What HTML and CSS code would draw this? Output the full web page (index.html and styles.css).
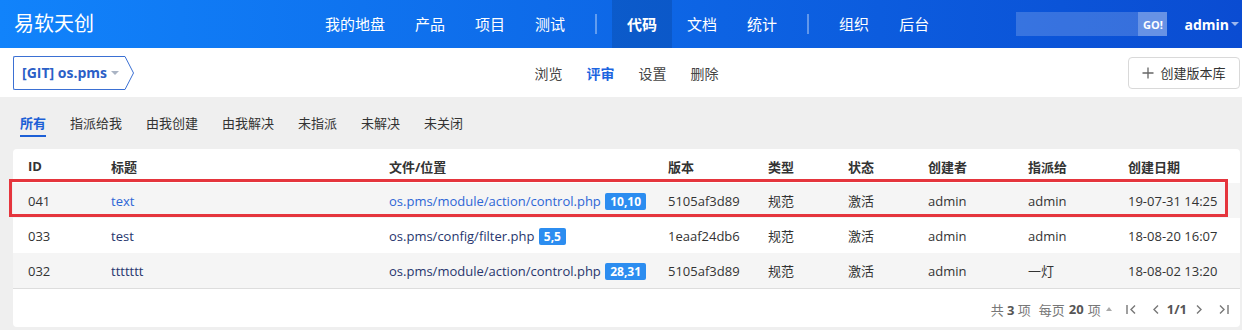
FILE: index.html
```html
<!DOCTYPE html>
<html lang="zh-CN">
<head>
    <meta charset="UTF-8">
    <title>代码评审 - 易软天创</title>
    <link rel="stylesheet" href="styles.css">
</head>
<body>

    <header class="topbar">
        <div class="logo">易软天创</div>
        <nav class="mainnav">
            <a href="#">我的地盘</a>
            <a href="#">产品</a>
            <a href="#">项目</a>
            <a href="#">测试</a>
            <span class="divider"></span>
            <a href="#" class="active">代码</a>
            <a href="#">文档</a>
            <a href="#">统计</a>
            <span class="divider"></span>
            <a href="#">组织</a>
            <a href="#">后台</a>
        </nav>
        <form class="search">
            <input type="text">
            <button type="button">GO!</button>
        </form>
        <div class="user">admin<span class="caret"></span></div>
    </header>

    <div class="subbar">
        <div class="repo">
            <span class="repo-name">[GIT] os.pms <span class="caret gray"></span></span>
            <svg class="repo-arrow" width="10" height="34" viewBox="0 0 10 34">
                <polyline points="0,0.5 8.5,17 0,33.5" fill="#fff" stroke="#3b70d3" stroke-width="1"/>
            </svg>
        </div>
        <nav class="submenu">
            <a href="#">浏览</a>
            <a href="#" class="active">评审</a>
            <a href="#">设置</a>
            <a href="#">删除</a>
        </nav>
        <div class="actions">
            <button class="btn-create">
                <svg width="12" height="12" viewBox="0 0 12 12"><path d="M6 0.5V11.5M0.5 6H11.5" stroke="#666" stroke-width="1.3"/></svg>
                创建版本库
            </button>
        </div>
    </div>

    <main class="content">
        <div class="filters">
            <a href="#" class="active">所有</a>
            <a href="#">指派给我</a>
            <a href="#">由我创建</a>
            <a href="#">由我解决</a>
            <a href="#">未指派</a>
            <a href="#">未解决</a>
            <a href="#">未关闭</a>
        </div>

        <div class="card">
            <table class="review-table">
                <colgroup>
                    <col style="width:83px"><col style="width:278px"><col style="width:279px">
                    <col style="width:100px"><col style="width:80px"><col style="width:80px">
                    <col style="width:100px"><col style="width:100px"><col>
                </colgroup>
                <thead>
                    <tr>
                        <th>ID</th><th>标题</th><th>文件/位置</th><th>版本</th><th>类型</th>
                        <th>状态</th><th>创建者</th><th>指派给</th><th>创建日期</th>
                    </tr>
                </thead>
                <tbody>
                    <tr class="odd current">
                        <td>041</td>
                        <td><a href="#">text</a></td>
                        <td><a href="#">os.pms/module/action/control.php</a> <span class="badge">10,10</span></td>
                        <td>5105af3d89</td><td>规范</td><td>激活</td><td>admin</td><td>admin</td><td>19-07-31 14:25</td>
                    </tr>
                    <tr>
                        <td>033</td>
                        <td><a href="#">test</a></td>
                        <td><a href="#">os.pms/config/filter.php</a> <span class="badge">5,5</span></td>
                        <td>1eaaf24db6</td><td>规范</td><td>激活</td><td>admin</td><td>admin</td><td>18-08-20 16:07</td>
                    </tr>
                    <tr class="odd">
                        <td>032</td>
                        <td><a href="#">ttttttt</a></td>
                        <td><a href="#">os.pms/module/action/control.php</a> <span class="badge">28,31</span></td>
                        <td>5105af3d89</td><td>规范</td><td>激活</td><td>admin</td><td>一灯</td><td>18-08-02 13:20</td>
                    </tr>
                </tbody>
            </table>

            <div class="pager">
                <span>共 <strong>3</strong> 项</span>
                <span class="per-page">每页 <strong>20</strong> 项 <span class="caret-up"></span></span>
                <svg class="pg-icon pg-first" width="10" height="11" viewBox="0 0 10 11"><path d="M1 1V10M9 1.5L5 5.5L9 9.5" /></svg>
                <svg class="pg-icon pg-prev" width="7" height="11" viewBox="0 0 7 11"><path d="M6 1.5L2 5.5L6 9.5" /></svg>
                <strong class="pg-num">1/1</strong>
                <svg class="pg-icon pg-next" width="7" height="11" viewBox="0 0 7 11"><path d="M1 1.5L5 5.5L1 9.5" /></svg>
                <svg class="pg-icon pg-last" width="10" height="11" viewBox="0 0 10 11"><path d="M1 1.5L5 5.5L1 9.5M9 1V10" /></svg>
            </div>

            <div class="mark"></div>
        </div>
    </main>

</body>
</html>
```

FILE: styles.css
```css
body {
    font-family: 'Open Sans', 'Noto Sans CJK SC', sans-serif;
    font-size: 13px;
    color: #333;
    background-color: #efefef;
    margin: 0;
    padding: 0;
}

a {
    text-decoration: none;
}

.topbar {
    display: flex;
    align-items: center;
    height: 48px;
    padding-left: 14px;
    background: linear-gradient(to right, #1183fb, #0a4cd2);
    color: white;
}

.logo {
    font-size: 20px;
    width: 80px;
    line-height: 48px;
}

.mainnav {
    display: flex;
    align-items: center;
    margin-left: 216px;
    height: 48px;
}

.mainnav a {
    color: white;
    font-size: 15px;
    line-height: 48px;
    padding: 0 15px;
}

.mainnav a.active {
    font-weight: bold;
    background: rgba(0, 0, 0, 0.12);
}

.mainnav .divider {
    width: 32px;
    height: 20px;
    background: linear-gradient(rgba(255, 255, 255, 0.35), rgba(255, 255, 255, 0.35)) no-repeat center / 2px 100%;
}

.search {
    display: flex;
    margin: 0 0 0 auto;
    height: 24px;
}

.search input {
    width: 122px;
    height: 24px;
    box-sizing: border-box;
    border: none;
    background: rgba(255, 255, 255, 0.18);
    padding: 0 6px;
}

.search button {
    width: 29px;
    height: 24px;
    border: none;
    padding: 0;
    background: rgba(255, 255, 255, 0.38);
    color: white;
    font-family: 'Open Sans', sans-serif;
    font-size: 11px;
    font-weight: bold;
}

.user {
    font-size: 14px;
    font-weight: bold;
    margin-left: 17px;
    padding-right: 3px;
    display: flex;
    align-items: center;
}

.caret {
    display: inline-block;
    width: 0;
    height: 0;
    margin-left: 2px;
    border-left: 4px solid transparent;
    border-right: 4px solid transparent;
    border-top: 4px solid rgba(255, 255, 255, 0.6);
}

.caret.gray {
    border-top-color: #aab4c4;
    margin-left: 4px;
    vertical-align: middle;
}

.subbar {
    display: grid;
    grid-template-columns: 1fr auto 1fr;
    align-items: center;
    height: 49px;
    padding: 0 2px 0 13px;
    background: white;
}

.repo {
    display: flex;
    height: 34px;
}

.repo-name {
    display: flex;
    align-items: center;
    height: 34px;
    box-sizing: border-box;
    padding: 0 6px 0 8px;
    border: 1px solid #3b70d3;
    border-right: none;
    border-radius: 2px 0 0 2px;
    color: #2b5fc7;
    font-weight: bold;
    font-size: 14px;
}

.repo-arrow {
    display: block;
}

.submenu {
    display: flex;
}

.submenu a {
    color: #444;
    font-size: 14px;
    padding: 0 12px;
}

.submenu a.active {
    color: #1c64e0;
    font-weight: bold;
}

.actions {
    display: flex;
    justify-content: flex-end;
}

.btn-create {
    display: flex;
    align-items: center;
    gap: 6px;
    height: 32px;
    width: 112px;
    justify-content: center;
    background: white;
    border: 1px solid #d9d9d9;
    border-radius: 4px;
    color: #333;
    font-family: 'Open Sans', 'Noto Sans CJK SC', sans-serif;
    font-size: 13px;
}

.content {
    padding: 0 2px 0 13px;
}

.filters {
    display: flex;
    align-items: center;
    height: 52px;
    padding-left: 7px;
}

.filters a {
    color: #333;
    line-height: 20px;
    padding: 4px 0 2px;
    border-bottom: 2px solid transparent;
    margin-right: 24px;
}

.filters a.active {
    color: #1c5fd6;
    font-weight: bold;
    border-bottom-color: #1c5fd6;
}

.card {
    position: relative;
    background: white;
    border-radius: 4px;
    height: 178px;
}

.review-table {
    width: 100%;
    table-layout: fixed;
    border-collapse: collapse;
}

.review-table th {
    text-align: left;
    font-weight: bold;
    height: 34px;
    padding: 0 0 0 15px;
}

.review-table td {
    height: 35px;
    padding: 0 0 0 15px;
    white-space: nowrap;
}

.review-table tr.odd td {
    background: #f5f5f5;
}

.review-table a {
    color: #27366e;
}

.review-table tr.current a {
    color: #2d66d6;
}

.badge {
    display: inline-block;
    background: #2c8df0;
    color: white;
    font-weight: bold;
    font-size: 12px;
    line-height: 17px;
    padding: 0 5px;
    border-radius: 2px;
    margin-left: 1px;
}

.pager {
    display: flex;
    align-items: center;
    justify-content: flex-end;
    height: 40px;
    border-top: 1px solid #dddddd;
    padding-right: 11px;
    color: #777;
}

.pager strong {
    color: #555;
}

.per-page {
    margin-left: 8px;
    display: flex;
    align-items: center;
    gap: 4px;
}

.caret-up {
    display: inline-block;
    width: 0;
    height: 0;
    margin-left: 1px;
    border-left: 3px solid transparent;
    border-right: 3px solid transparent;
    border-bottom: 4px solid #aaa;
}

.pg-icon path {
    fill: none;
    stroke: #777;
    stroke-width: 1.4;
}

.pg-first {
    margin-left: 14px;
}

.pg-prev {
    margin-left: 16px;
}

.pg-num {
    margin: 0 9px 0 8px;
}

.pg-last {
    margin-left: 16px;
}

.mark {
    position: absolute;
    left: -4px;
    top: 30px;
    width: 1219px;
    height: 38px;
    box-sizing: border-box;
    border: 3px solid #e5353d;
}
```
